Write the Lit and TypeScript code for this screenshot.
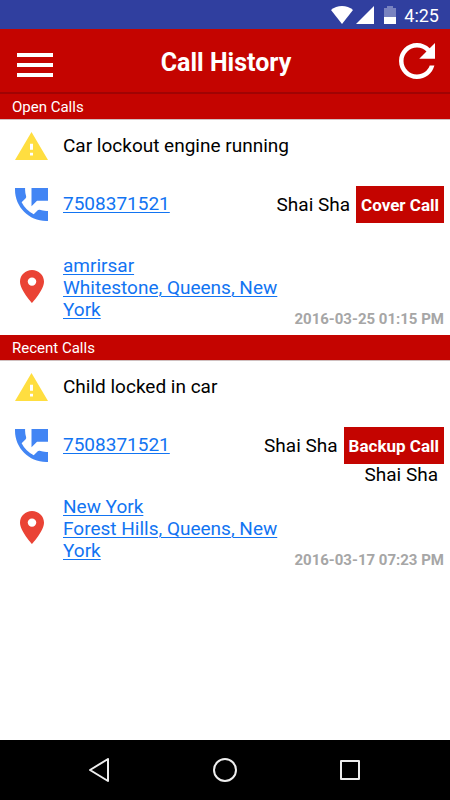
import { LitElement, html, css, svg, nothing } from "lit";
import { customElement, property } from "lit/decorators.js";

interface Call {
  problem: string;
  phone: string;
  taker: string;
  action: string;
  backup?: string;
  place: string;
  area: string;
  time: string;
}

const OPEN_CALLS: Call[] = [
  {
    problem: "Car lockout engine running",
    phone: "7508371521",
    taker: "Shai Sha",
    action: "Cover Call",
    place: "amrirsar",
    area: "Whitestone, Queens, New York",
    time: "2016-03-25 01:15 PM",
  },
];

const RECENT_CALLS: Call[] = [
  {
    problem: "Child locked in car",
    phone: "7508371521",
    taker: "Shai Sha",
    action: "Backup Call",
    backup: "Shai Sha",
    place: "New York",
    area: "Forest Hills, Queens, New York",
    time: "2016-03-17 07:23 PM",
  },
];

@customElement("status-bar")
export class StatusBar extends LitElement {
  static styles = css`
    :host {
      display: flex;
      align-items: center;
      justify-content: flex-end;
      height: 29px;
      padding: 0 11px 0 0;
      background: #303f9f;
      color: #fff;
      font: 400 18px/29px Roboto, sans-serif;
    }
    .wifi { margin-right: 3px; }
    .signal { margin-right: 10px; }
    .battery { margin-right: 8px; }
    svg { display: block; fill: #fff; }
    .time { padding-top: 2px; }
  `;

  render() {
    return html`
      <svg class="wifi" width="22" height="18" viewBox="0 0 22 18">
        <path d="M11 18 0 4C3 1.500 7 0 11 0s8 1.500 11 4z" />
      </svg>
      <svg class="signal" width="18" height="18" viewBox="0 0 18 18">
        <path d="M0 18 18 0v18z" />
      </svg>
      <svg class="battery" width="12" height="18" viewBox="0 0 12 18">
        <path fill-opacity=".35" d="M3 0h6v2h3v9H0V2h3z" />
        <path d="M0 11h12v7H0z" />
      </svg>
      <span class="time">4:25</span>
    `;
  }
}

@customElement("title-bar")
export class TitleBar extends LitElement {
  static styles = css`
    :host {
      display: grid;
      grid-template-columns: 1fr auto 1fr;
      align-items: center;
      height: 63px;
      padding: 0 15px 0 17px;
      border-bottom: 2px solid #a00303;
      background: #c40400;
      color: #fff;
      box-sizing: content-box;
    }
    h1 {
      margin: 0;
      padding-top: 4px;
      font: 700 25px/30px Roboto, sans-serif;
    }
    button {
      justify-self: start;
      padding: 0;
      border: 0;
      background: none;
      cursor: pointer;
    }
    .menu { padding-top: 8px; }
    .refresh { justify-self: end; }
    svg { display: block; fill: #fff; }
  `;

  render() {
    return html`
      <button class="menu" aria-label="Menu">
        <svg width="36" height="24" viewBox="0 0 36 24">
          <path d="M0 0h36v4H0zM0 10h36v4H0zM0 20h36v4H0z" />
        </svg>
      </button>
      <h1>Call History</h1>
      <button class="refresh" aria-label="Refresh">
        <svg width="36" height="36" viewBox="4 4 16 16">
          <path d="M17.650 6.350C16.200 4.900 14.210 4 12 4c-4.420 0-7.990 3.580-7.990 8s3.570 8 7.990 8c3.730 0 6.840-2.550 7.730-6h-2.080c-.82 2.330-3.040 4-5.650 4-3.310 0-6-2.690-6-6s2.690-6 6-6c1.660 0 3.140.69 4.220 1.780L13 11h7V4z" />
        </svg>
      </button>
    `;
  }
}

const warningIcon = svg`<svg class="icon" width="33" height="28" viewBox="1 2 22 19" preserveAspectRatio="none">
  <path fill="#ffde40" d="M1 21h22L12 2zm12-3h-2v-2h2zm0-4h-2v-4h2z" /></svg>`;
const phoneIcon = svg`<svg class="icon" width="33" height="33" viewBox="3 3 18 18">
  <path fill="#4285f4" d="M20 15.500c-1.250 0-2.450-.2-3.570-.57-.35-.11-.74-.03-1.020.24l-2.200 2.200c-2.830-1.440-5.150-3.750-6.590-6.590l2.200-2.200c.28-.28.36-.67.25-1.020C8.700 6.450 8.500 5.250 8.500 4V3H3v1c0 9.390 7.610 17 17 17h1v-5.500zM12 3v10l3-3h6V3z" /></svg>`;
const pinIcon = svg`<svg class="icon" width="24" height="33" viewBox="5 2 14 20" preserveAspectRatio="none">
  <path fill="#ea4335" d="M12 2C8.130 2 5 5.130 5 9c0 5.250 7 13 7 13s7-7.750 7-13c0-3.870-3.130-7-7-7zm0 9.500a2.500 2.500 0 1 1 0-5 2.500 2.500 0 0 1 0 5z" /></svg>`;

@customElement("call-card")
export class CallCard extends LitElement {
  @property({ attribute: false }) call!: Call;

  static styles = css`
    :host {
      display: block;
      padding: 0 6px 0 15px;
      font: 19px/22px Roboto, sans-serif;
      color: #000;
    }
    .row {
      display: grid;
      grid-template-columns: 33px minmax(0, 1fr) auto;
      align-items: center;
    }
    .text { padding-left: 15px; }
    .problem { height: 52px; }
    .contact { height: 65px; }
    .contact .text { padding-bottom: 2px; }
    .location { height: 98px; padding-top: 4px; box-sizing: border-box; }
    .icon { display: block; justify-self: center; }
    .location .icon { margin-bottom: 4px; }
    .side {
      position: relative;
      display: flex;
      align-items: center;
      gap: 6px;
    }
    button {
      height: 37px;
      padding: 0 5px;
      border: 0;
      background: #c40400;
      color: #fff;
      font: 700 17px/20px Roboto, sans-serif;
      cursor: pointer;
    }
    .backup {
      position: absolute;
      top: 100%;
      right: 6px;
    }
    a {
      color: #1274f2;
      text-decoration: underline;
      text-decoration-thickness: 1px;
      text-underline-offset: 2px;
    }
    time {
      align-self: end;
      padding-bottom: 5px;
      color: #a6a6a6;
      font: 700 15px/22px Roboto, sans-serif;
    }
  `;

  render() {
    const c = this.call;
    return html`
      <div class="row problem">${warningIcon}<span class="text">${c.problem}</span></div>
      <div class="row contact">
        ${phoneIcon}
        <span class="text"><a href="tel:${c.phone}">${c.phone}</a></span>
        <div class="side">
          <span>${c.taker}</span>
          <button>${c.action}</button>
          ${c.backup ? html`<span class="backup">${c.backup}</span>` : nothing}
        </div>
      </div>
      <div class="row location">
        ${pinIcon}
        <span class="text"><a href="#map">${c.place}<br />${c.area}</a></span>
        <time>${c.time}</time>
      </div>
    `;
  }
}

@customElement("nav-bar")
export class NavBar extends LitElement {
  static styles = css`
    :host {
      display: flex;
      justify-content: center;
      align-items: center;
      gap: 101px;
      height: 60px;
      background: #000;
    }
    button { padding: 0; border: 0; background: none; cursor: pointer; }
    svg { display: block; fill: none; stroke: #eee; stroke-width: 2; stroke-linejoin: round; }
  `;

  render() {
    return html`
      <button aria-label="Back">
        <svg width="24" height="24" viewBox="0 0 24 24"><path d="M20 1v22L2 12z" /></svg>
      </button>
      <button aria-label="Home">
        <svg width="24" height="24" viewBox="0 0 24 24"><circle cx="12" cy="12" r="11" /></svg>
      </button>
      <button aria-label="Recent apps">
        <svg width="24" height="24" viewBox="0 0 24 24"><path d="M3 3h18v18H3z" /></svg>
      </button>
    `;
  }
}

@customElement("app-root")
export class AppRoot extends LitElement {
  static styles = css`
    :host {
      display: flex;
      flex-direction: column;
      min-height: 100vh;
      background: #fff;
    }
    main { flex: 1; }
    h2 {
      margin: 0;
      padding: 1px 12px 0;
      height: 24px;
      border-bottom: 1px solid #d0c0c0;
      background: #c40400;
      color: #fff;
      font: 400 15px/24px Roboto, sans-serif;
    }
  `;

  private section(title: string, calls: Call[]) {
    return html`
      <section>
        <h2>${title}</h2>
        ${calls.map((call) => html`<call-card .call=${call}></call-card>`)}
      </section>
    `;
  }

  render() {
    return html`
      <status-bar></status-bar>
      <title-bar></title-bar>
      <main>
        ${this.section("Open Calls", OPEN_CALLS)}
        ${this.section("Recent Calls", RECENT_CALLS)}
      </main>
      <nav-bar></nav-bar>
    `;
  }
}
